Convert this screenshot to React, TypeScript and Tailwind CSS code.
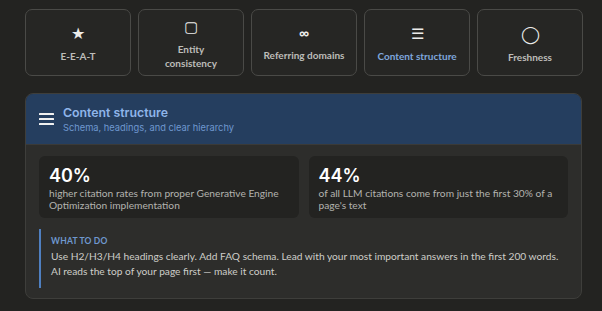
import React from "react";

const tabs = [
  { icon: "★", label: "E-E-A-T", active: false, iconCls: "text-[16px]" },
  { icon: "▢", label: "Entity\nconsistency", active: false, iconCls: "text-[15px]" },
  { icon: "∞", label: "Referring domains", active: false, iconCls: "text-[14px] font-bold" },
  { icon: "☰", label: "Content structure", active: true, iconCls: "text-[15px]" },
  { icon: "◯", label: "Freshness", active: false, iconCls: "text-[17px]" },
];

function Burger() {
  return (
    <svg width="15" height="14" viewBox="0 0 15 14" className="shrink-0">
      <rect x="0" y="1" width="15" height="2" rx="0.5" fill="#f0f0f0" />
      <rect x="0" y="6" width="15" height="2" rx="0.5" fill="#f0f0f0" />
      <rect x="0" y="11" width="15" height="2" rx="0.5" fill="#f0f0f0" />
    </svg>
  );
}

export default function App() {
  return (
    <div
      className="w-[602px] h-[311px] bg-[#232321] overflow-hidden pl-[25px] pr-[19px] pt-[9px]"
      style={{ fontFamily: "Lato, 'Noto Sans', sans-serif" }}
    >
      <div className="flex gap-[7px]">
        {tabs.map((t) => (
          <div
            key={t.label}
            className="w-[106px] shrink-0 h-[67px] rounded-[7px] border border-[#4a4a47] bg-[#262624] flex flex-col items-center justify-center gap-[8px] pt-[3px]"
          >
            <div className={`leading-none text-[#ececea] ${t.iconCls}`}>{t.icon}</div>
            <div
              className={`text-[10px] font-bold leading-[14px] text-center whitespace-pre-line ${
                t.active ? "text-[#7fa7dd]" : "text-[#bdbdb9]"
              }`}
            >
              {t.label}
            </div>
          </div>
        ))}
      </div>

      <div className="mt-[17px] w-[557px] rounded-[8px] border border-[#3e3e3b] bg-[#2d2d2b] overflow-hidden">
        <div className="h-[51px] bg-[#253e5f] flex items-center pl-[13px] gap-[9px] border-b border-[#3a3a38]">
          <Burger />
          <div className="flex flex-col">
            <div className="text-[12.3px] font-semibold leading-[17px] text-[#8fb5ea]" style={{ fontFamily: "Inter, sans-serif" }}>
              Content structure
            </div>
            <div className="text-[9.3px] leading-[14px] text-[#6f98cf]" style={{ fontFamily: "Inter, sans-serif" }}>
              Schema, headings, and clear hierarchy
            </div>
          </div>
        </div>

        <div className="px-[13px] pt-[11px] pb-[10px]">
          <div className="grid grid-cols-2 gap-[10px]">
            <div className="h-[62px] rounded-[6px] bg-[#232321] px-[10px] pt-[9px]">
              <div className="text-[18px] font-semibold leading-[22px] text-white" style={{ fontFamily: "Inter, sans-serif" }}>40%</div>
              <div className="text-[10.2px] leading-[12px] text-[#b3b3af]">
                higher citation rates from proper Generative Engine Optimization implementation
              </div>
            </div>
            <div className="h-[62px] rounded-[6px] bg-[#232321] px-[10px] pt-[9px]">
              <div className="text-[18px] font-semibold leading-[22px] text-white" style={{ fontFamily: "Inter, sans-serif" }}>44%</div>
              <div className="text-[10.2px] leading-[12px] text-[#b3b3af]">
                of all LLM citations come from just the first 30% of a page's text
              </div>
            </div>
          </div>

          <div className="mt-[11px] border-l-2 border-[#4f7fc0] pl-[10px] pt-[6px] pb-[9px]">
            <div className="text-[8.5px] font-bold leading-[12px] text-[#6f98cf] tracking-[0.2px]">WHAT TO DO</div>
            <div className="mt-[2px] text-[10.2px] leading-[15px] text-[#cdcdc9]">
              Use H2/H3/H4 headings clearly. Add FAQ schema. Lead with your most important answers in the first 200 words. AI reads the top of your page first — make it count.
            </div>
          </div>
        </div>
      </div>
    </div>
  );
}
